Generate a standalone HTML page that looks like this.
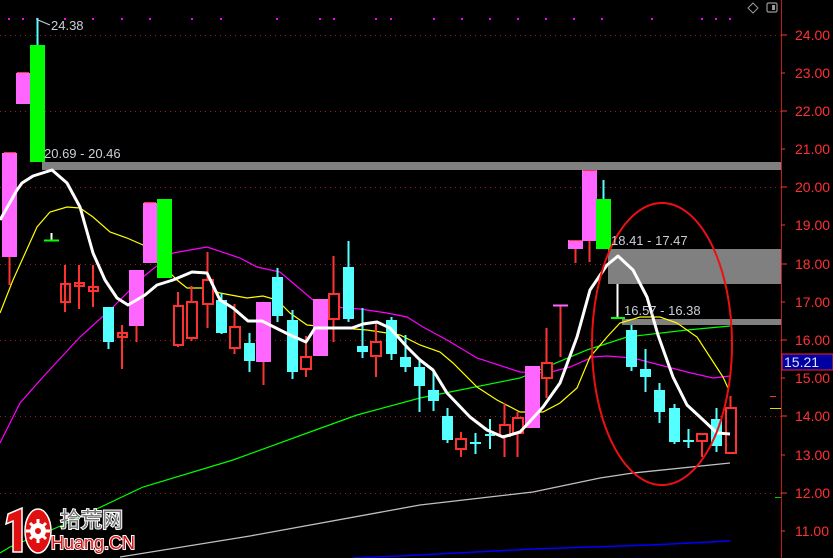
<!DOCTYPE html>
<html><head><meta charset="utf-8"><style>
html,body{margin:0;padding:0;background:#000;width:833px;height:558px;overflow:hidden}
svg{display:block}
.ax{font-family:"Liberation Sans",sans-serif;font-size:14px;fill:#ff3232}
.lb{font-family:"Liberation Sans",sans-serif;font-size:13px;fill:#c8d0d8}
</style></head><body>
<svg width="833" height="558" viewBox="0 0 833 558" xmlns="http://www.w3.org/2000/svg">
<rect width="833" height="558" fill="#000"/>
<g stroke="#a01818" stroke-width="1" stroke-dasharray="1,4">
<line x1="0" y1="35.5" x2="781" y2="35.5"/><line x1="0" y1="111.5" x2="781" y2="111.5"/>
<line x1="0" y1="187.5" x2="781" y2="187.5"/><line x1="0" y1="264.5" x2="781" y2="264.5"/>
<line x1="0" y1="340.5" x2="781" y2="340.5"/><line x1="0" y1="416.5" x2="781" y2="416.5"/>
<line x1="0" y1="493.5" x2="781" y2="493.5"/>
</g>
<g fill="#ff00ff">
<rect x="8" y="18" width="2" height="2"/><rect x="22" y="18" width="2" height="2"/><rect x="36" y="18" width="2" height="2"/><rect x="64" y="18" width="2" height="2"/><rect x="92" y="18" width="2" height="2"/><rect x="121" y="18" width="2" height="2"/><rect x="149" y="18" width="2" height="2"/><rect x="191" y="18" width="2" height="2"/><rect x="220" y="18" width="2" height="2"/><rect x="276" y="18" width="2" height="2"/><rect x="319" y="18" width="2" height="2"/><rect x="333" y="18" width="2" height="2"/><rect x="375" y="18" width="2" height="2"/><rect x="390" y="18" width="2" height="2"/><rect x="433" y="18" width="2" height="2"/><rect x="461" y="18" width="2" height="2"/><rect x="489" y="18" width="2" height="2"/><rect x="517" y="18" width="2" height="2"/><rect x="545" y="18" width="2" height="2"/><rect x="573" y="18" width="2" height="2"/><rect x="601" y="18" width="2" height="2"/><rect x="651" y="18" width="2" height="2"/><rect x="701" y="18" width="2" height="2"/><rect x="715" y="18" width="2" height="2"/><rect x="729" y="18" width="2" height="2"/>
</g>
<g fill="#808080">
<rect x="42" y="162" width="739" height="8"/>
<rect x="608" y="249" width="173" height="35"/>
<rect x="622" y="319" width="159" height="6"/>
</g>
<polyline fill="none" stroke="#0000ff" stroke-width="1.5" points="353,558 400,556 533,549 650,545 730,541"/>
<polyline fill="none" stroke="#c0c0c0" stroke-width="1.3" points="120,557 250,536 420,505 533,492 600,478 633,473 730,463"/>
<polyline fill="none" stroke="#00ff00" stroke-width="1.2" points="0,553 10,547 63,525 143,487 233,460 310,432 357,415 420,398 520,378 587,350 627,337 687,330 730,326"/>
<polyline fill="none" stroke="#ff00ff" stroke-width="1.2" points="0,443 20,403 43,377 80,337 110,310 128,292 143,277 173,253 207,247 240,258 257,267 280,272 293,283 313,300 333,307 360,309 387,313 407,317 423,327 447,340 477,358 520,372 547,373 570,367 593,357 607,356 633,358 660,365 687,372 713,378 730,376"/>
<polyline fill="none" stroke="#ffff00" stroke-width="1.2" points="0,313 13,280 37,227 50,212 67,207 80,208 93,217 110,232 127,238 143,245 177,280 187,288 203,288 220,293 247,298 263,296 277,300 290,313 307,325 328,327 367,330 400,335 420,345 440,352 453,363 477,387 497,400 520,412 543,412 560,403 577,388 590,357 607,337 620,323 640,317 660,317 677,323 697,337 710,357 723,377 728,388"/>
<g stroke-width="2">
<g fill="#ff66ff" stroke="none">
<rect x="2" y="153" width="15" height="104"/><rect x="16" y="73" width="14" height="31"/><rect x="129" y="270" width="15" height="56"/><rect x="143" y="203" width="14" height="60"/><rect x="256" y="302" width="15" height="60"/><rect x="313" y="299" width="15" height="57"/><rect x="525" y="366" width="15" height="62"/><rect x="568" y="240" width="15" height="9"/><rect x="582" y="170" width="15" height="71"/>
</g>
<g stroke="#ff3232">
<line x1="9.5" y1="257" x2="9.5" y2="285"/><line x1="136.5" y1="326" x2="136.5" y2="342"/><line x1="263.5" y1="362" x2="263.5" y2="385"/><line x1="575.5" y1="249" x2="575.5" y2="263"/><line x1="589.5" y1="241" x2="589.5" y2="262"/>
</g>
<g fill="#ff3232"><rect x="4" y="152" width="12" height="1"/><rect x="17" y="72" width="12" height="1"/><rect x="144" y="202" width="12" height="1"/><rect x="569" y="240" width="13" height="1"/><rect x="583" y="170" width="13" height="1"/></g>
<line x1="37.5" y1="18" x2="37.5" y2="45" stroke="#54ffff"/>
<line x1="603.5" y1="180" x2="603.5" y2="199" stroke="#54ffff"/>
<g fill="#00ff00"><rect x="30" y="45" width="15" height="117"/><rect x="157" y="199" width="15" height="79"/><rect x="596" y="199" width="15" height="50"/></g>
<line x1="51.5" y1="233" x2="51.5" y2="240" stroke="#fff"/><line x1="44" y1="240.5" x2="59" y2="240.5" stroke="#00ff00"/>
<line x1="617.5" y1="284" x2="617.5" y2="317" stroke="#fff"/><line x1="611" y1="318" x2="625" y2="318" stroke="#00ff00"/>
<g stroke="#ff3232" fill="none">
<line x1="65" y1="265" x2="65" y2="312"/><rect x="61" y="284" width="9" height="18"/>
<line x1="79" y1="265" x2="79" y2="309"/><rect x="75" y="283" width="9" height="3"/>
<line x1="93" y1="265" x2="93" y2="307"/><rect x="89" y="287" width="9" height="4"/>
<line x1="122" y1="325" x2="122" y2="369"/><rect x="118" y="333" width="9" height="4"/>
<line x1="178" y1="292" x2="178" y2="347"/><rect x="174" y="306" width="9" height="39" fill="#000"/>
<line x1="191.5" y1="286" x2="191.5" y2="341"/><rect x="187" y="302" width="10" height="36" fill="#000"/>
<line x1="207.5" y1="252" x2="207.5" y2="328"/><rect x="203" y="280" width="10" height="24" fill="#000"/>
<line x1="234.5" y1="304" x2="234.5" y2="354"/><rect x="230" y="327" width="10" height="21" fill="#000"/>
<line x1="306" y1="336" x2="306" y2="377"/><rect x="301" y="357" width="10" height="12" fill="#000"/>
<line x1="333.5" y1="256" x2="333.5" y2="342"/><rect x="329" y="294" width="10" height="25" fill="#000"/>
<line x1="376" y1="323" x2="376" y2="377"/><rect x="371" y="342" width="10" height="14" fill="#000"/>
<line x1="461" y1="432" x2="461" y2="457"/><rect x="456" y="439" width="10" height="10" fill="#000"/>
<line x1="504.5" y1="403" x2="504.5" y2="457"/><rect x="500" y="425" width="10" height="11" fill="#000"/>
<line x1="517.5" y1="412" x2="517.5" y2="457"/><rect x="513" y="418" width="10" height="15" fill="#000"/>
<line x1="546.5" y1="328" x2="546.5" y2="398"/><rect x="542" y="363" width="10" height="15" fill="#000"/>
<line x1="560.5" y1="305" x2="560.5" y2="357"/><line x1="553" y1="305.5" x2="568" y2="305.5" stroke="#ff66ff"/>
<line x1="702" y1="434" x2="702" y2="457"/><rect x="697" y="434" width="10" height="7" fill="#000"/>
<line x1="730.5" y1="396" x2="730.5" y2="408"/><rect x="726" y="408" width="10" height="45" fill="#000"/>
</g>
<g stroke="#54ffff">
<line x1="108.5" y1="307" x2="108.5" y2="349"/><line x1="221.5" y1="293" x2="221.5" y2="334"/><line x1="249.5" y1="333" x2="249.5" y2="372"/><line x1="277.5" y1="268" x2="277.5" y2="322"/><line x1="292.5" y1="310" x2="292.5" y2="379"/><line x1="348.5" y1="241" x2="348.5" y2="322"/><line x1="362.5" y1="308" x2="362.5" y2="358"/><line x1="391.5" y1="317" x2="391.5" y2="360"/><line x1="405.5" y1="335" x2="405.5" y2="372"/><line x1="419.5" y1="358" x2="419.5" y2="412"/><line x1="433.5" y1="371" x2="433.5" y2="411"/><line x1="447.5" y1="408" x2="447.5" y2="443"/><line x1="475.5" y1="433" x2="475.5" y2="454"/><line x1="470" y1="443" x2="481" y2="443"/><line x1="490" y1="419" x2="490" y2="449"/><line x1="485" y1="435" x2="495" y2="435"/><line x1="631.5" y1="325" x2="631.5" y2="371"/><line x1="645.5" y1="349" x2="645.5" y2="392"/><line x1="659.5" y1="383" x2="659.5" y2="423"/><line x1="674.5" y1="404" x2="674.5" y2="444"/><line x1="688.5" y1="429" x2="688.5" y2="448"/><line x1="683" y1="441" x2="694" y2="441"/><line x1="716.5" y1="408" x2="716.5" y2="452"/>
</g>
<g fill="#54ffff">
<rect x="103" y="307" width="11" height="35"/><rect x="216" y="300" width="11" height="33"/><rect x="244" y="343" width="11" height="18"/><rect x="272" y="277" width="11" height="39"/><rect x="287" y="320" width="11" height="52"/><rect x="343" y="267" width="11" height="52"/><rect x="357" y="346" width="11" height="6"/><rect x="386" y="320" width="11" height="34"/><rect x="400" y="357" width="11" height="10"/><rect x="414" y="367" width="11" height="19"/><rect x="428" y="390" width="11" height="11"/><rect x="442" y="416" width="11" height="24"/><rect x="626" y="330" width="11" height="37"/><rect x="640" y="369" width="11" height="8"/><rect x="654" y="390" width="11" height="22"/><rect x="669" y="408" width="11" height="34"/><rect x="711" y="419" width="11" height="27"/>
</g>
</g>
<polyline fill="none" stroke="#fff" stroke-width="3" stroke-linejoin="round" points="0,220 17,190 22,183 33,176 52,170 67,183 80,207 93,253 105,280 117,298 128,305 145,295 157,285 173,280 192,272 207,273 220,300 233,308 248,321 262,321 272,326 290,335 306,342 315,328 352,328 363,324 377,322 390,328 407,347 420,360 433,370 447,393 470,417 487,430 503,437 520,432 533,418 543,407 560,383 577,337 590,290 607,265 618,256 633,270 647,297 658,335 673,377 687,405 700,417 717,433 730,434"/>
<ellipse cx="662" cy="344" rx="70" ry="141" fill="none" stroke="#ee1010" stroke-width="2"/>
<line x1="38" y1="20" x2="50" y2="25" stroke="#c8d0d8" stroke-width="1"/>
<text class="lb" x="51" y="30">24.38</text>
<text class="lb" x="44" y="158">20.69 - 20.46</text>
<text class="lb" x="611" y="245">18.41 - 17.47</text>
<text class="lb" x="624" y="315">16.57 - 16.38</text>
<line x1="781.5" y1="0" x2="781.5" y2="558" stroke="#c81818" stroke-width="1"/>
<g stroke="#ff3232">
<line x1="781" y1="35" x2="787" y2="35"/><line x1="781" y1="73" x2="785" y2="73"/><line x1="781" y1="111" x2="787" y2="111"/><line x1="781" y1="149" x2="785" y2="149"/><line x1="781" y1="187" x2="787" y2="187"/><line x1="781" y1="225" x2="785" y2="225"/><line x1="781" y1="264" x2="787" y2="264"/><line x1="781" y1="302" x2="785" y2="302"/><line x1="781" y1="340" x2="787" y2="340"/><line x1="781" y1="378" x2="785" y2="378"/><line x1="781" y1="416" x2="787" y2="416"/><line x1="781" y1="455" x2="785" y2="455"/><line x1="781" y1="493" x2="787" y2="493"/><line x1="781" y1="531" x2="785" y2="531"/>
<line x1="770" y1="396.5" x2="776" y2="396.5"/>
</g>
<line x1="770" y1="408.5" x2="781" y2="408.5" stroke="#dddd00"/>
<line x1="775" y1="497.5" x2="781" y2="497.5" stroke="#00cc00"/>
<g class="ax">
<text x="795" y="40">24.00</text><text x="795" y="78">23.00</text><text x="795" y="116">22.00</text><text x="795" y="154">21.00</text><text x="795" y="192">20.00</text><text x="795" y="230">19.00</text><text x="795" y="269">18.00</text><text x="795" y="307">17.00</text><text x="795" y="345">16.00</text><text x="795" y="383">15.00</text><text x="795" y="421">14.00</text><text x="795" y="460">13.00</text><text x="795" y="498">12.00</text><text x="795" y="536">11.00</text>
</g>
<rect x="782" y="354" width="51" height="16" fill="#0000a0" stroke="#ff2020" stroke-width="1"/>
<text x="784" y="367" style="font-family:'Liberation Sans',sans-serif;font-size:14px;fill:#e0e0ff">15.21</text>
<path d="M753 3 L758 8 L753 13 L748 8 Z" fill="none" stroke="#999" stroke-width="1"/>
<rect x="767" y="3" width="10" height="9" rx="1.5" fill="none" stroke="#999" stroke-width="1.2"/>
<rect x="772" y="5" width="3" height="5" fill="#999"/>
<!-- logo -->
<path d="M8 514 L22 508 L22 552 L13 552 L13 521 L6 524 Z" fill="#e01010" stroke="#fff" stroke-width="1.5"/>
<ellipse cx="38" cy="531" rx="13" ry="22" fill="#e01010" stroke="#fff" stroke-width="1.5"/>
<circle cx="38" cy="531" r="8" fill="#fff"/>
<g stroke="#fff" stroke-width="3"><line x1="38" y1="519" x2="38" y2="543"/><line x1="26" y1="531" x2="50" y2="531"/><line x1="30" y1="523" x2="46" y2="539"/><line x1="46" y1="523" x2="30" y2="539"/></g>
<circle cx="38" cy="531" r="3" fill="#e01010"/>
<text x="60" y="527" font-family="'Liberation Sans','Noto Sans CJK SC',sans-serif" font-size="21" fill="#777" stroke="#fff" stroke-width="2" paint-order="stroke">拾荒网</text>
<text x="51" y="549" font-family="'Liberation Sans',sans-serif" font-size="18" fill="#e01010" stroke="#fff" stroke-width="2" paint-order="stroke">Huang.CN</text>
</svg>
</body></html>
